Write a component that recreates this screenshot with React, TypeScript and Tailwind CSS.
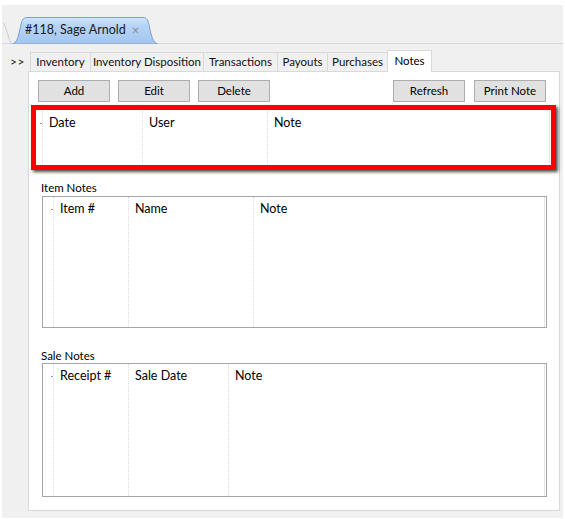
import React from 'react'

type Col = { label: string; width?: number }

const subTabs = [
  { label: 'Inventory', w: 60 },
  { label: 'Inventory Disposition', w: 113 },
  { label: 'Transactions', w: 74 },
  { label: 'Payouts', w: 50 },
  { label: 'Purchases', w: 60 },
]

function ToolButton({ label }: { label: string }) {
  return (
    <button
      type="button"
      className="w-[72px] h-[22px] bg-[#e1e1e1] border border-[#adadad] text-[11.5px] leading-none text-black flex items-center justify-center"
    >
      {label}
    </button>
  )
}

// grid header + empty body, dotted column lines running full height
function GridCols({ cols, rowHeaderW }: { cols: Col[]; rowHeaderW: number }) {
  return (
    <div className="flex h-full">
      <div className="shrink-0 relative" style={{ width: rowHeaderW }}>
        <div className="absolute right-0 top-[12px] w-[2px] h-px bg-[#9a9a9a]" />
      </div>
      {cols.map((c) => (
        <div
          key={c.label}
          className={
            'h-full border-l border-dotted border-[#dcdcdc] pl-[6px] pt-[3px] leading-[18px] ' +
            (c.width ? 'shrink-0' : 'flex-1')
          }
          style={c.width ? { width: c.width } : undefined}
        >
          {c.label}
        </div>
      ))}
      <div className="w-[2px] shrink-0 border-l border-[#e4e4e4]" />
    </div>
  )
}

function NotesGrid({ cols, height }: { cols: Col[]; height: number }) {
  return (
    <div
      className="ml-[13px] w-[505px] border border-[#a5a5a5] bg-white text-[12.5px]"
      style={{ height }}
    >
      <GridCols cols={cols} rowHeaderW={10} />
    </div>
  )
}

export default function App() {
  return (
    <div className="w-[565px] h-[519px] bg-white pt-[5px] px-[2px] font-['Lato',sans-serif] text-[11.5px] text-black overflow-hidden">
      <div className="h-[513px] bg-[#f0f0f0] flex flex-col">
        {/* editor tab strip */}
        <div className="h-[39px] border-b border-[#d6d9df] relative shrink-0">
          <svg className="absolute left-0 top-[16px]" width="10" height="23" viewBox="0 0 10 23">
            <path d="M1 2 C3 4 4 8 6 14 C7 18 8 21 10 23" fill="none" stroke="#c9ccd3" strokeWidth="1" />
          </svg>
          <div className="relative ml-[10px] mt-[12px] w-[146px] h-[27px] flex items-center pl-[13px]">
            <svg className="absolute inset-0" width="146" height="27" viewBox="0 0 146 27">
              <defs>
                <linearGradient id="tabg" x1="0" y1="0" x2="0" y2="1">
                  <stop offset="0" stopColor="#d3e6fc" />
                  <stop offset="0.3" stopColor="#b6d4f8" />
                  <stop offset="1" stopColor="#a2c6f1" />
                </linearGradient>
              </defs>
              <path
                d="M0.5 27 C5 25 6 21 8 12 C9.5 4 10.5 0.5 15 0.5 L131 0.5 C135 0.5 136 3 137.5 10 C139.5 20 141 25 145.5 27 Z"
                fill="url(#tabg)"
                stroke="#7f9fc8"
                strokeWidth="1"
              />
            </svg>
            <span className="relative text-[12.5px] text-[#1a1a1a]">#118, Sage Arnold</span>
            <span className="relative ml-[6px] text-[13px] text-[#8a8a8a]">×</span>
          </div>
        </div>

        <div className="flex flex-1">
          <div className="w-[26px] shrink-0 pl-[8px] pt-[10px] text-[12px] leading-[16px] tracking-[0.5px] text-[#222]">
            &gt;&gt;
          </div>

          <div className="w-[532px] shrink-0 pt-[6px] flex flex-col">
            <div className="flex items-end h-[21px] pl-[2px]">
              {subTabs.map((t) => (
                <div
                  key={t.label}
                  className="h-[19px] border-l border-t border-[#d9d9d9] bg-[#f0f0f0] flex items-center justify-center whitespace-nowrap text-[#111]"
                  style={{ width: t.w }}
                >
                  {t.label}
                </div>
              ))}
              <div className="relative z-10 -mb-px w-[45px] h-[22px] border-l border-t border-r border-[#d9d9d9] bg-white flex justify-center pt-[2px] leading-[16px]">
                Notes
              </div>
            </div>

            <div className="h-[440px] bg-white border border-[#d9d9d9] flex flex-col">
              <div className="flex mt-[8px] ml-[9px] mr-[13px]">
                <div className="flex gap-[8px]">
                  <ToolButton label="Add" />
                  <ToolButton label="Edit" />
                  <ToolButton label="Delete" />
                </div>
                <div className="flex gap-[9px] ml-auto">
                  <ToolButton label="Refresh" />
                  <ToolButton label="Print Note" />
                </div>
              </div>

              {/* highlighted notes grid */}
              <div className="mt-[3px] ml-[2px] mr-[3px] h-[65px] border-[5px] border-[#ff0000] bg-white shadow-[2px_2px_3px_rgba(0,0,0,0.7)] text-[12.5px] pt-[1px]">
                <GridCols
                  cols={[
                    { label: 'Date', width: 100 },
                    { label: 'User', width: 125 },
                    { label: 'Note' },
                  ]}
                  rowHeaderW={6}
                />
              </div>

              <div className="mt-[10px] ml-[12px] h-[15px] leading-[15px]">Item Notes</div>
              <div className="mt-[1px]">
                <NotesGrid
                  height={132}
                  cols={[
                    { label: 'Item #', width: 75 },
                    { label: 'Name', width: 125 },
                    { label: 'Note' },
                  ]}
                />
              </div>

              <div className="mt-[20px] ml-[12px] h-[15px] leading-[15px]">Sale Notes</div>
              <NotesGrid
                height={134}
                cols={[
                  { label: 'Receipt #', width: 75 },
                  { label: 'Sale Date', width: 100 },
                  { label: 'Note' },
                ]}
              />
            </div>
          </div>
        </div>
      </div>
    </div>
  )
}
